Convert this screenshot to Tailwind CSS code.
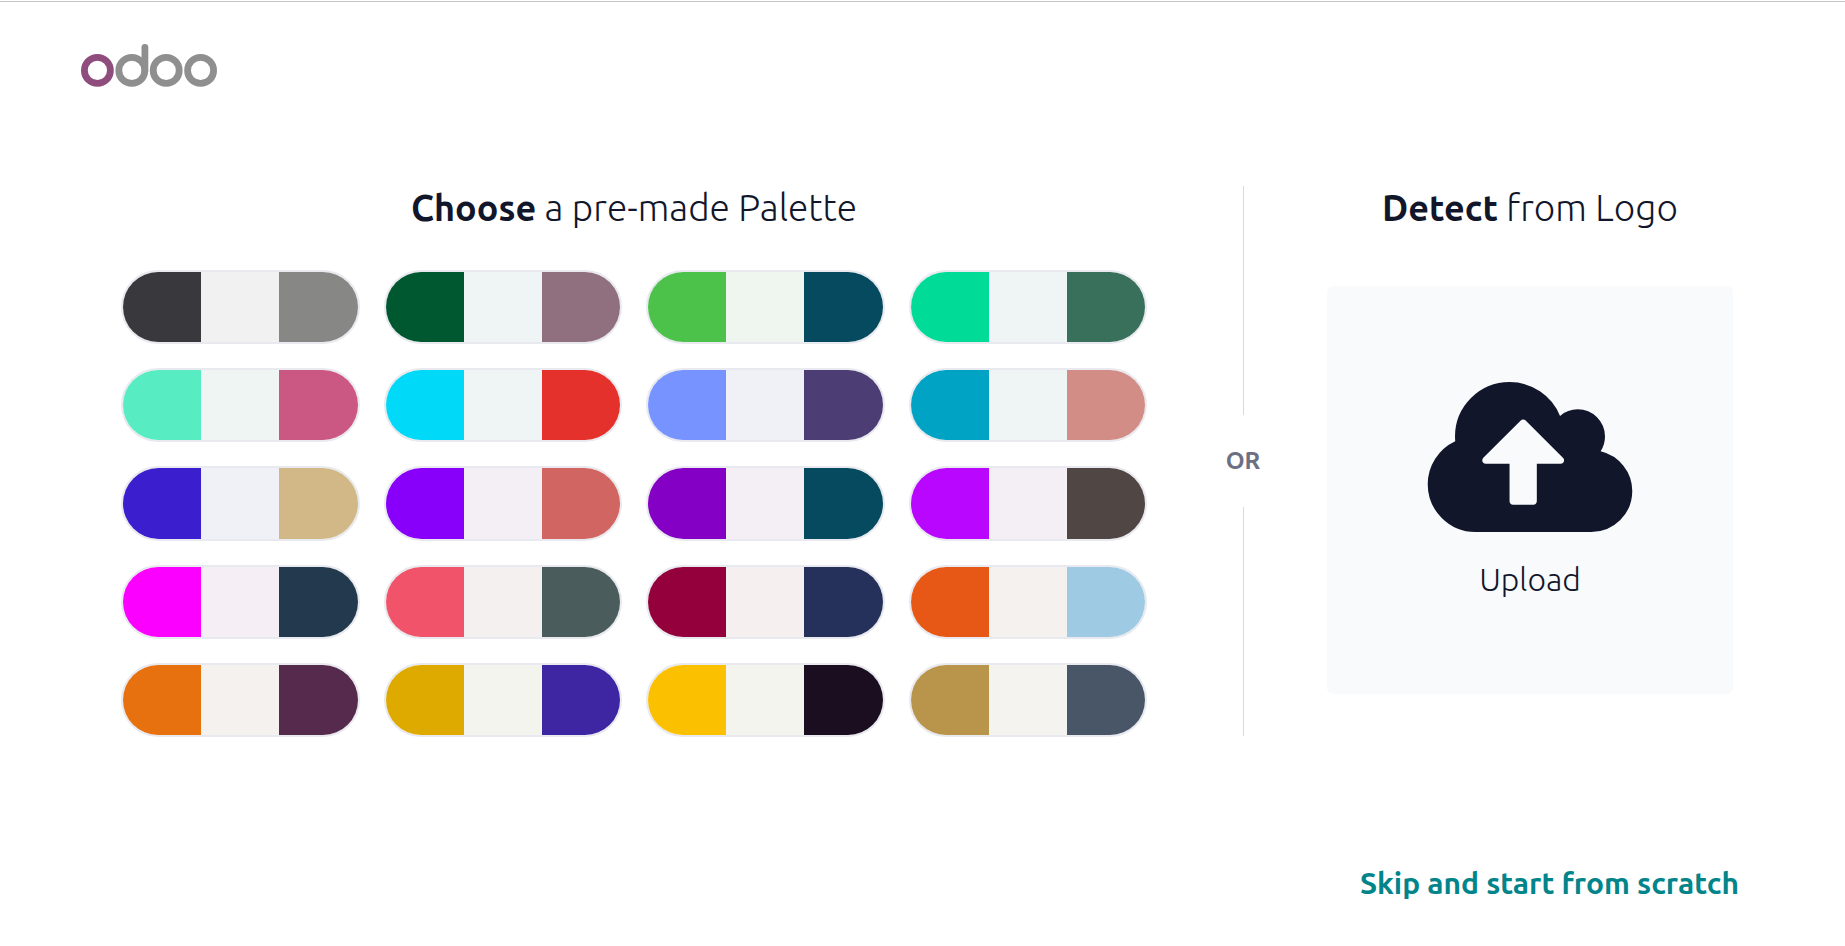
<!DOCTYPE html>
<html lang="en">
<head>
<meta charset="utf-8">
<meta name="viewport" content="width=device-width, initial-scale=1">
<title>Odoo – Choose a palette</title>
<script src="https://cdn.jsdelivr.net/npm/@tailwindcss/browser@4"></script>
</head>
<body class="flex min-h-screen flex-col bg-white pt-px font-[Ubuntu,'Open_Sans','Noto_Sans',sans-serif] text-[#12162a]">
  <header class="border-t border-[#c4c4c4] pl-20 pt-10">
    <a href="#" aria-label="Odoo" class="block w-fit">
      <svg class="block" width="138" height="46" viewBox="80 42 138 46" fill="none" stroke="#8f8f8f" stroke-width="6.8" stroke-linecap="round">
        <circle cx="97.4" cy="70.4" r="13" stroke="#8f4d7e"/>
        <circle cx="131.8" cy="70.4" r="13"/>
        <path d="M144.9 70.4V47.3"/>
        <circle cx="166.2" cy="70.4" r="13"/>
        <circle cx="200.6" cy="70.4" r="13"/>
      </svg>
    </a>
  </header>

  <main class="mt-[98px] grid grid-cols-[1038fr_168px_406fr] pl-[121px] pr-28">
    <section class="pr-3">
      <h2 class="text-center text-[37px] leading-[44px] font-light"><b class="text-[36px] font-semibold">Choose</b> a pre-made Palette</h2>
      <div id="palettes" class="mt-10 grid min-h-[467px] grid-cols-4 gap-6"></div>
    </section>

    <div class="flex flex-col items-center pb-px">
      <div class="w-px flex-1 bg-[#d9dadd]"></div>
      <span class="py-7 text-[24px] leading-9 font-semibold text-[#6b7083]">OR</span>
      <div class="w-px flex-1 bg-[#d9dadd]"></div>
    </div>

    <section>
      <h2 class="text-center text-[37px] leading-[44px] font-light whitespace-nowrap"><b class="text-[36px] font-semibold">Detect</b> from Logo</h2>
      <button type="button" class="mt-14 flex h-[408px] w-full flex-col items-center rounded-md bg-[#f9fafc] pt-24">
        <svg width="206" height="150" viewBox="0 0 1920 1408" fill="#12162a" aria-hidden="true">
          <path transform="matrix(1 0 0 -1 0 1408)" d="M1280 672q0 14 -9 23l-352 352q-9 9 -23 9t-23 -9l-351 -351q-10 -12 -10 -24q0 -14 9 -23t23 -9h224v-352q0 -13 9.500 -22.500t22.500 -9.500h192q13 0 22.500 9.500t9.500 22.500v352h224q13 0 22.500 9.500t9.500 22.500zM1920 384q0 -159 -112.500 -271.500t-271.500 -112.500h-1088q-185 0 -316.500 131.500t-131.500 316.500q0 130 70 240t188 165q-2 30 -2 43q0 212 150 362t362 150q156 0 285.500 -87t188.500 -231q71 62 166 62q106 0 181 -75t75 -181q0 -76 -41 -138q130 -31 213.500 -135.500t83.500 -238.500z"/>
        </svg>
        <span class="mt-6 text-[32px] leading-[46px] font-light">Upload</span>
      </button>
    </section>
  </main>

  <footer class="mt-auto flex justify-end pr-[106px] pb-10">
    <a href="#" class="text-[30px] leading-[46px] font-semibold text-[#01858a]">Skip and start from scratch</a>
  </footer>

  <template id="pill">
    <button type="button" class="flex min-h-[74px] items-stretch overflow-hidden rounded-full border-2 border-[#e9eaef]">
      <span class="flex-1"></span><span class="flex-1"></span><span class="flex-1"></span>
    </button>
  </template>
  <script>
    const palettes = [
      ['#39383d', '#f1f1f1', '#878786'], ['#005831', '#eff5f4', '#90707f'], ['#4dc24a', '#eff5ef', '#064a60'], ['#00dc98', '#eff5f4', '#38705b'],
      ['#57ecc2', '#eff5f3', '#cb5783'], ['#00d9f7', '#eff4f5', '#e4312c'], ['#7793ff', '#f0f1f6', '#4d3d75'], ['#00a3c3', '#eff4f5', '#d18d86'],
      ['#3b1ecd', '#f0f1f6', '#d2b887'], ['#8800f9', '#f3eff5', '#d06561'], ['#8400c4', '#f3eff5', '#064a60'], ['#b907ff', '#f3eff5', '#504644'],
      ['#fb00ff', '#f5eef5', '#23394d'], ['#f1546a', '#f5f0f0', '#4a5c5b'], ['#93003c', '#f5eff0', '#26315b'], ['#e75817', '#f5f1ee', '#9fcae4'],
      ['#e7710f', '#f5f1ef', '#562a4c'], ['#dfaa00', '#f3f4ee', '#3e26a3'], ['#fbc000', '#f3f4ee', '#1c0e21'], ['#b8954a', '#f4f3ef', '#485667']
    ];
    const grid = document.getElementById('palettes');
    const pill = document.getElementById('pill');
    palettes.forEach((colors, i) => {
      const button = pill.content.firstElementChild.cloneNode(true);
      button.setAttribute('aria-label', 'Palette ' + (i + 1));
      colors.forEach((c, n) => { button.children[n].style.backgroundColor = c; });
      grid.append(button);
    });
  </script>
</body>
</html>
